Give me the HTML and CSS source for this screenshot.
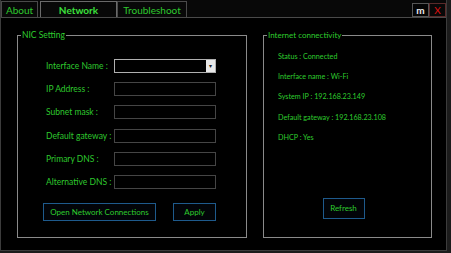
FILE: index.html
```html
<!DOCTYPE html>
<html lang="en">
<head>
  <meta charset="UTF-8" />
  <title>Network Tool</title>
  <link rel="stylesheet" href="styles.css">
</head>
<body>
  <div class="window">
    <div class="tabbar">
      <div class="tab">About</div>
      <div class="tab active">Network</div>
      <div class="tab">Troubleshoot</div>
      <div class="spacer"></div>
      <div class="ctrl min">m</div>
      <div class="ctrl close">X</div>
    </div>

    <div class="main">
      <fieldset class="group nic">
        <legend>NIC Setting</legend>
        <div class="form">
          <label>Interface Name :</label>
          <div class="combo"><span class="arrow">&#9662;</span></div>
          <label>IP Address :</label>
          <div class="field"></div>
          <label>Subnet mask :</label>
          <div class="field"></div>
          <label>Default gateway :</label>
          <div class="field"></div>
          <label>Primary DNS :</label>
          <div class="field"></div>
          <label>Alternative DNS :</label>
          <div class="field"></div>
        </div>
        <div class="actions">
          <button class="btn wide">Open Network Connections</button>
          <button class="btn apply">Apply</button>
        </div>
      </fieldset>

      <fieldset class="group status">
        <legend>Internet connectivity</legend>
        <div class="info">
          <div>Status : Connected</div>
          <div>Interface name : Wi-Fi</div>
          <div>System IP : 192.168.23.149</div>
          <div>Default gateway : 192.168.23.108</div>
          <div>DHCP : Yes</div>
        </div>
        <div class="refresh-row">
          <button class="btn refresh">Refresh</button>
        </div>
      </fieldset>
    </div>
  </div>
</body>
</html>
```

FILE: styles.css
```css
body {
  margin: 0;
  background: #1c1c1c;
  font-family: Lato, 'Open Sans', sans-serif;
  color: #2ecc2e;
}

.window {
  width: 447px;
  height: 251px;
  box-sizing: border-box;
  background: #000;
  border: 1px solid #3c3c3c;
  border-top: none;
  display: flex;
  flex-direction: column;
}

.tabbar {
  display: flex;
  align-items: stretch;
  height: 18px;
  box-sizing: border-box;
  padding-top: 1px;
  border-bottom: 1px solid #4a4a4a;
  background: #080808;
}

.tab {
  display: flex;
  align-items: center;
  justify-content: center;
  font-size: 10px;
  color: #2ec82e;
  border: 1px solid #4a4a4a;
  border-bottom: none;
  padding: 0 6px;
}

.tab:first-child {
  width: 37px;
  box-sizing: border-box;
  margin-right: 2px;
}

.tab.active {
  width: 77px;
  box-sizing: border-box;
  font-weight: bold;
  color: #3ce03c;
  border-color: #6a6a6a;
}

.tab:nth-child(3) {
  width: 70px;
  box-sizing: border-box;
}

.spacer {
  flex: 1;
}

.ctrl {
  width: 17px;
  margin-top: 2px;
  box-sizing: border-box;
  display: flex;
  align-items: center;
  justify-content: center;
  font-size: 10px;
  font-weight: bold;
  border: 1px solid #555;
}

.ctrl.min {
  color: #eee;
  background: #050505;
}

.ctrl.close {
  color: #e01010;
  border-color: #5a2a2a;
  font-weight: normal;
}

.main {
  flex: 1;
  display: flex;
  gap: 16px;
  padding: 12px 14px 12px 16px;
}

.group {
  margin: 0;
  border: 1px solid #8a8a8a;
  padding: 0;
  min-width: 0;
}

.group legend {
  font-size: 8.5px;
  padding: 0 1px;
  margin-left: 3px;
  color: #2ecc2e;
}

.nic {
  width: 230px;
  box-sizing: border-box;
}

.status {
  flex: 1;
}

.status legend {
  font-size: 8px;
}

.form {
  display: grid;
  grid-template-columns: 68px 102px;
  row-gap: 9.2px;
  align-items: center;
  margin: 19px 0 0 28px;
}

.form label {
  font-size: 8.5px;
  color: #2ec82e;
}

.field, .combo {
  height: 14px;
  box-sizing: border-box;
  border: 1px solid #454545;
}

.combo {
  border-color: #b0b0b0;
  position: relative;
}

.arrow {
  position: absolute;
  right: 0;
  top: 0;
  width: 9px;
  height: 12px;
  background: #e8e8e8;
  color: #222;
  font-size: 6px;
  line-height: 12px;
  text-align: center;
}

.actions {
  display: flex;
  margin: 14px 0 0 25px;
}

.btn {
  font-family: Lato, 'Open Sans', sans-serif;
  font-size: 8px;
  color: #2ecc2e;
  background: #020408;
  border: 1px solid #1e5a8c;
  height: 18px;
  padding: 0;
}

.btn.wide {
  width: 113px;
}

.btn.apply {
  width: 43px;
  margin-left: 17px;
}

.info {
  margin: 12px 0 0 14px;
  font-size: 7.2px;
  color: #2ecc2e;
  display: flex;
  flex-direction: column;
  gap: 11.2px;
}

.refresh-row {
  display: flex;
  justify-content: center;
  margin-top: 56px;
  padding-right: 8px;
}

.btn.refresh {
  width: 42px;
  height: 21px;
}
```
